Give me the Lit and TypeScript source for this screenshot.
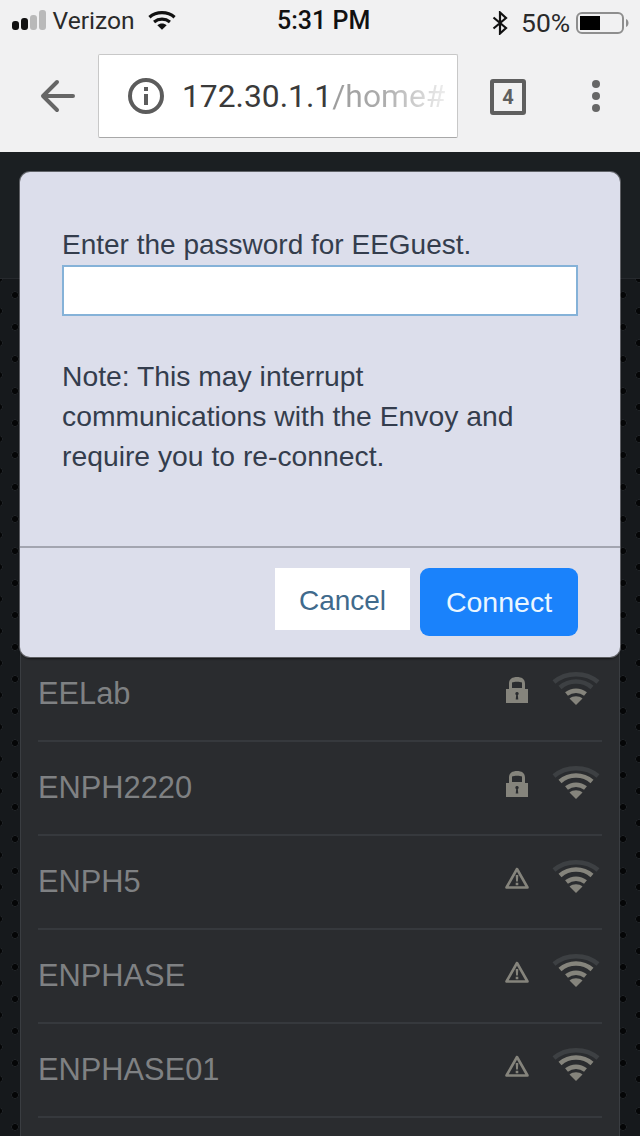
import { LitElement, html, css, svg } from "lit";
import { customElement } from "lit/decorators.js";

const lock = svg`<svg width="24" height="28" viewBox="0 0 24 28"><path fill="#85847c" fill-rule="evenodd" d="M1 13h3V7.500C4 3 7.500 1 12 1s8 2 8 6.500V13h3v14H1zM7 6.500V12h10V6.500C15 5.500 9 5.500 7 6.500z"/><path fill="#2a2c2f" d="M12 16a1.700 1.700 0 0 1 .8 3.200l.5 4.300h-2.600l.5-4.300A1.700 1.700 0 0 1 12 16z"/></svg>`;
const warn = svg`<svg width="26" height="24" viewBox="0 0 26 24"><path fill="none" stroke="#85847c" stroke-width="2.600" stroke-linejoin="round" d="M13 3 2.500 21.500h21z"/><path fill="#85847c" d="M11.700 9h2.600l-.4 6.500h-1.800zM11.700 16.800h2.600v2.500h-2.600z"/></svg>`;
const wifi = (bars: number) => svg`<svg width="50" height="38" viewBox="0 0 50 38">
  <g fill="none" stroke-width="4.500" stroke-linecap="butt">
    <path stroke="#3d4043" d="M3 12C15 1.500 35 1.500 47 12"/>
    <path stroke="${bars >= 3 ? "#85847c" : "#3d4043"}" d="M9 17.500C18 9.500 32 9.500 41 17.500"/>
    <path stroke="#85847c" d="M15.500 24C21 19.500 29 19.500 34.500 24"/>
  </g>
  <path fill="#85847c" d="M25 35 18.500 28.500C22 25.500 28 25.500 31.500 28.500z"/></svg>`;

const rows: [string, "lock" | "warn", number][] = [
  ["EELab", "lock", 2],
  ["ENPH2220", "lock", 3],
  ["ENPH5", "warn", 3],
  ["ENPHASE", "warn", 3],
  ["ENPHASE01", "warn", 3],
];

@customElement("app-root")
export class AppRoot extends LitElement {
  static styles = css`
    :host { display: block; width: 640px; height: 1136px; overflow: hidden; position: relative; font-family: "Liberation Sans", Arial, sans-serif; background: #f1f1f2; }
    .status { height: 40px; display: flex; align-items: center; padding: 0 0 0 12px; font-family: Roboto, sans-serif; font-size: 24.600px; color: #2a2a2a; position: relative; }
    .signal { display: flex; align-items: flex-end; gap: 2.500px; height: 20px; margin-right: 7px; }
    .signal i { display: block; width: 6.500px; border-radius: 3px; background: #111; }
    .signal i.off { background: #b9b9b9; }
    .carrier { margin-right: 13px; }
    .status-wifi { width: 28px; height: 21px; }
    .time { position: absolute; left: 277px; top: 6px; font-size: 25px; font-weight: 500; color: #111; }
    .right { position: absolute; left: 492px; top: 7px; display: flex; align-items: center; font-size: 26.500px; }
    .pct { margin: 0 6px 0 13px; }
    .toolbar { height: 112px; display: flex; align-items: flex-start; }
    .back { margin: 38px 0 0 38px; width: 38px; height: 36px; }
    .url { margin: 14px 0 0 22px; width: 360px; height: 84px; box-sizing: border-box; background: #fff; border: 1px solid #c8c8c8; border-bottom-color: #a8a8a8; border-radius: 2px; display: flex; align-items: center; padding-left: 29px; overflow: hidden; }
    .addr { margin-left: 18px; font-family: Roboto, sans-serif; font-size: 31.800px; white-space: nowrap; color: #3a3a3a; }
    .path { background: linear-gradient(90deg, #9c9c9c, #acacac 45%, #ededed); -webkit-background-clip: text; background-clip: text; color: transparent; }
    .tabs { margin: 39px 0 0 32px; width: 36px; height: 36px; box-sizing: border-box; border: 4px solid #5f5f5f; border-radius: 3px; display: flex; align-items: center; justify-content: center; font: 700 20px Roboto, sans-serif; color: #5f5f5f; }
    .menu { margin: 40px 0 0 66px; display: flex; flex-direction: column; gap: 4px; }
    .menu i { display: block; width: 8px; height: 8px; border-radius: 50%; background: #666; }
    .page { height: 984px; box-sizing: border-box; padding: 0 20px; background-color: #16191c;
      background-image: radial-gradient(circle, #050607 2.800px, #2a2d30 3.200px, transparent 3.800px), radial-gradient(circle, #050607 2.800px, #2a2d30 3.200px, transparent 3.800px);
      background-size: 32px 32px; background-position: -1px -1px, 15px 15px; }
    .head { height: 126px; margin: 0 -20px; background: #1b1f22; box-shadow: 0 1px 0 #26292d; }
    .list { background: #2a2c2f; border-left: 1px solid #3a3d41; border-right: 1px solid #3a3d41; padding: 370px 17px 0; height: 858px; box-sizing: border-box; }
    .row { height: 94px; box-sizing: border-box; border-bottom: 2px solid #36393d; display: flex; align-items: center; font-size: 30.800px; color: #7f8183; }
    .row .name { flex: 1; }
    .row .sec { width: 26px; display: flex; justify-content: center; margin-right: 21px; margin-top: -8px; }
    .row .sig { width: 50px; margin-right: 1px; margin-top: -11px; display: flex; }
    .modal { position: absolute; left: 20px; top: 172px; width: 600px; height: 485px; box-sizing: border-box; background: #dcdeeb; border-radius: 10px; color: #343d4d; font-size: 28px; display: flex; flex-direction: column; box-shadow: 0 0 0 1px rgba(225,226,235,.35), 0 2px 2px rgba(0,0,0,.5); }
    .body { height: 376px; box-sizing: border-box; padding: 53px 42px 0; border-bottom: 2px solid #a3a5b0; }
    .label { line-height: 40px; }
    .input { height: 51px; box-sizing: border-box; background: #fff; border: 2px solid #85b2d8; }
    .note { margin-top: 40px; line-height: 40px; font-size: 28.300px; }
    .foot { flex: 1; display: flex; align-items: flex-start; justify-content: flex-end; gap: 10px; padding: 20px 42px 0 0; }
    .btn { display: flex; align-items: center; justify-content: center; }
    .cancel { width: 135px; height: 62px; box-sizing: border-box; padding-top: 3px; background: #fff; color: #3f6a8c; font-size: 28px; }
    .connect { width: 158px; height: 68px; background: #1a82fb; color: #eaf6ff; border-radius: 9px; font-size: 28.500px; }
  `;

  render() {
    return html`
      <div class="status">
        <div class="signal"><i style="height:9px"></i><i style="height:12px"></i><i class="off" style="height:15px"></i><i class="off" style="height:20px"></i></div>
        <span class="carrier">Verizon</span>
        <svg class="status-wifi" viewBox="0 0 30 22"><g fill="none" stroke="#111" stroke-width="3.400"><path d="M1.500 7.500C9 1 21 1 28.500 7.500"/><path d="M6.500 12.500C11.500 8.500 18.500 8.500 23.500 12.500"/></g><path fill="#111" d="M15 21 10 16c3-2.500 7-2.500 10 0z"/></svg>
        <span class="time">5:31 PM</span>
        <div class="right">
          <svg width="16" height="24" viewBox="0 0 16 24"><path fill="none" stroke="#111" stroke-width="2.200" d="M1.500 6.500 14 17 8 22.500V1.500L14 7 1.500 17.500"/></svg>
          <span class="pct">50%</span>
          <svg width="54" height="24" viewBox="0 0 54 24"><rect x="1" y="2" width="46" height="20" rx="5" fill="none" stroke="#8e8e8e" stroke-width="2"/><rect x="4" y="5" width="20" height="14" fill="#000"/><path d="M50 8c2 1 2.500 2.500 2.500 4s-.5 3-2.500 4z" fill="#8e8e8e"/></svg>
        </div>
      </div>
      <div class="toolbar">
        <svg class="back" viewBox="0 0 38 36"><path fill="none" stroke="#666" stroke-width="4" stroke-linecap="round" stroke-linejoin="round" d="M35 18H6M19 4 5 18l14 14"/></svg>
        <div class="url">
          <svg width="36" height="36" viewBox="0 0 36 36"><circle cx="18" cy="18" r="16" fill="none" stroke="#5c5c5c" stroke-width="4"/><path fill="#5c5c5c" d="M16 9h4v4h-4zM16 16h4v11h-4z"/></svg>
          <span class="addr">172.30.1.1<span class="path">/home#</span></span>
        </div>
        <div class="tabs">4</div>
        <div class="menu"><i></i><i></i><i></i></div>
      </div>
      <div class="page">
        <div class="head"></div>
        <div class="list">
          ${rows.map(([name, sec, bars]) => html`
            <div class="row">
              <span class="name">${name}</span>
              <span class="sec">${sec === "lock" ? lock : warn}</span>
              <span class="sig">${wifi(bars)}</span>
            </div>`)}
        </div>
      </div>
      <div class="modal">
        <div class="body">
          <div class="label">Enter the password for EEGuest.</div>
          <div class="input"></div>
          <div class="note">Note: This may interrupt<br>communications with the Envoy and<br>require you to re-connect.</div>
        </div>
        <div class="foot">
          <div class="btn cancel">Cancel</div>
          <div class="btn connect">Connect</div>
        </div>
      </div>
    `;
  }
}
